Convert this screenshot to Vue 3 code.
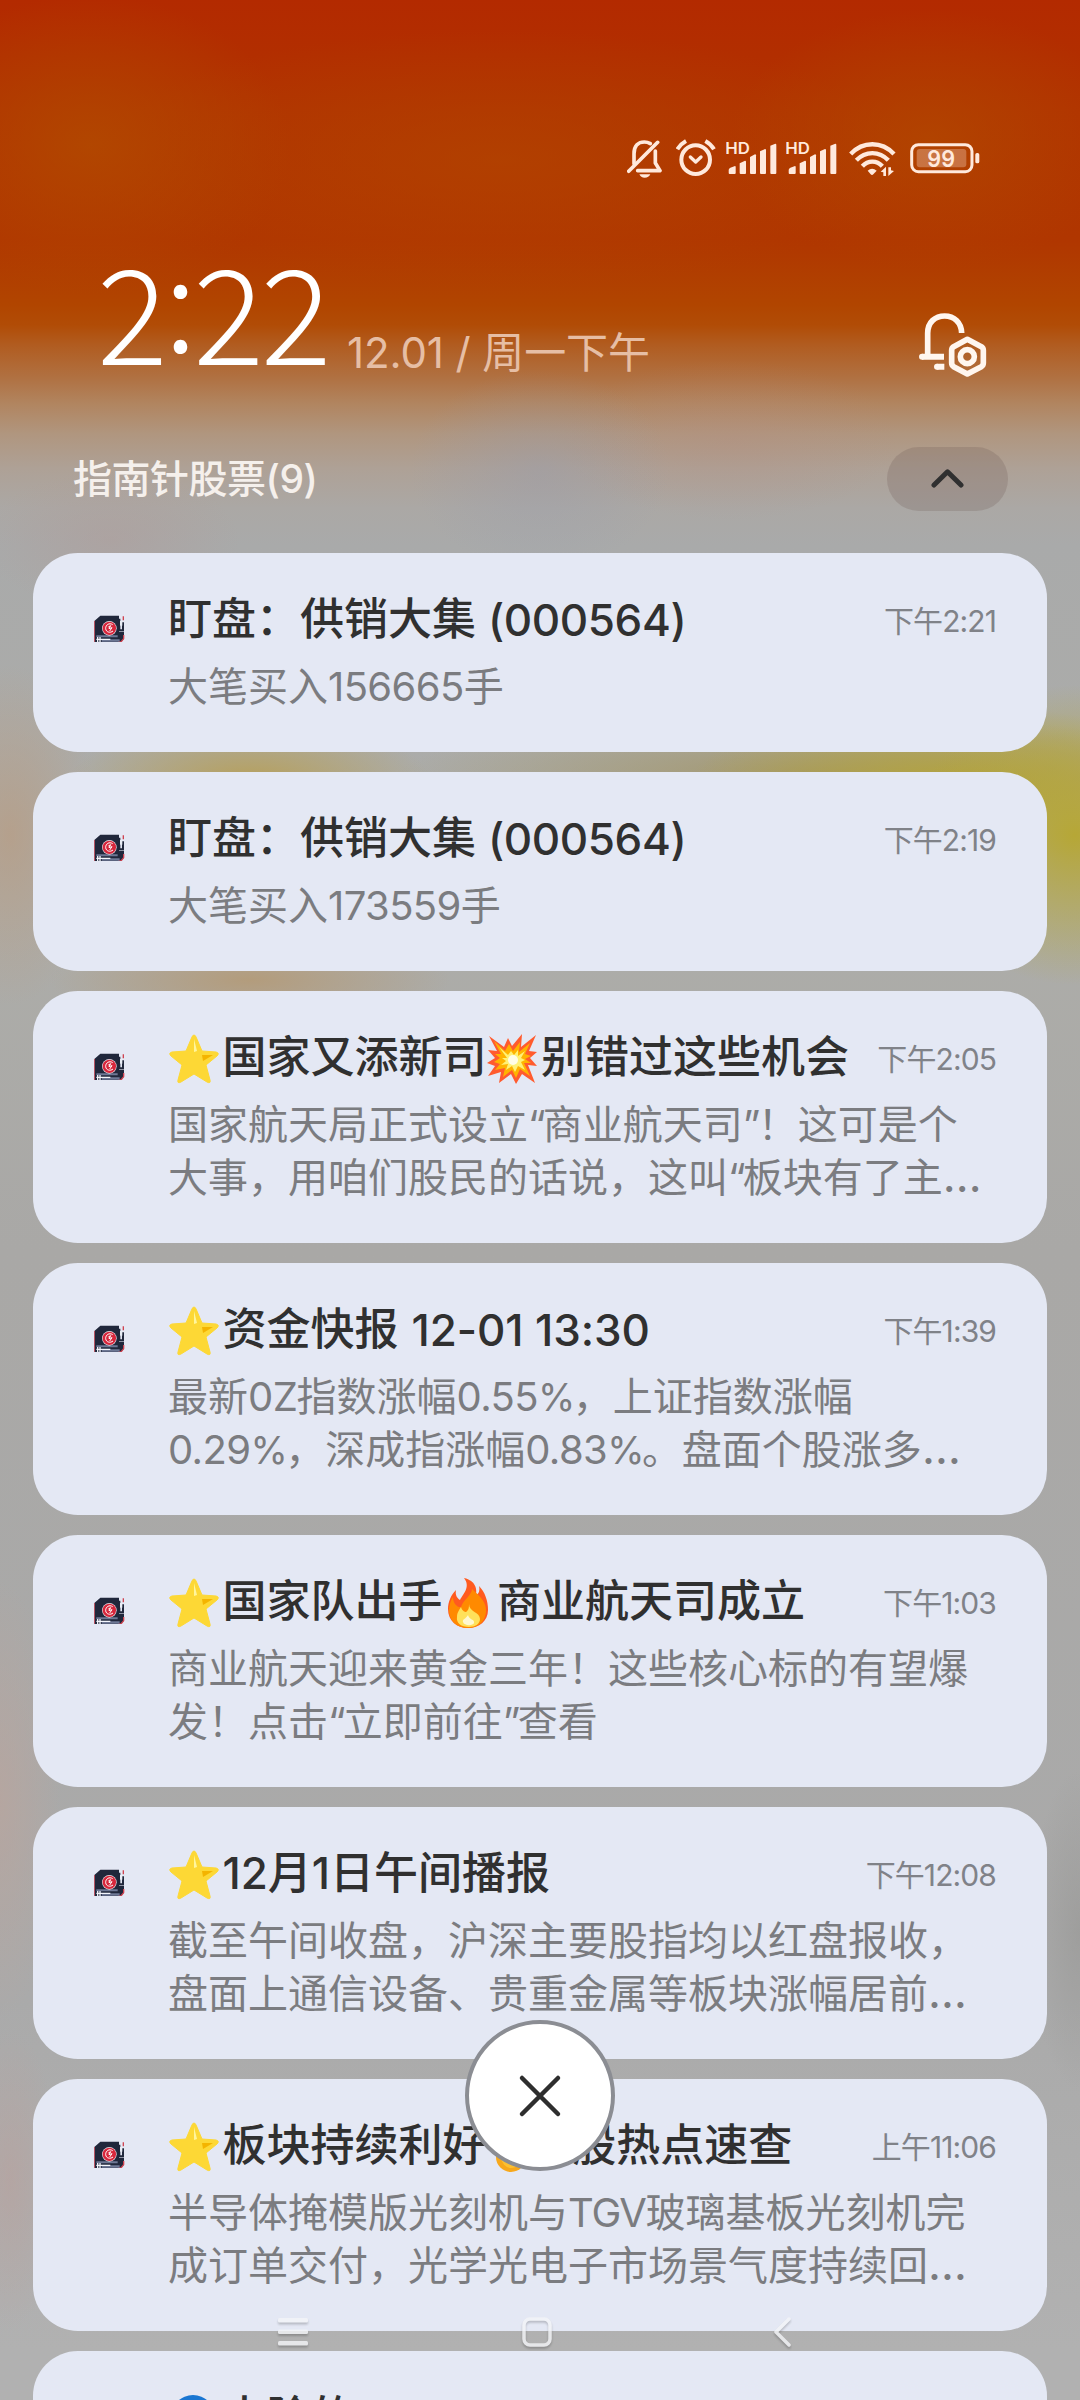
<script setup>
const group = { name: '指南针股票(9)' }

const notices = [
  { title: [{ t: '盯盘：供销大集' }, { t: '(000564)', k: 'num' }], time: '下午2:21', lines: ['大笔买入156665手'] },
  { title: [{ t: '盯盘：供销大集' }, { t: '(000564)', k: 'num' }], time: '下午2:19', lines: ['大笔买入173559手'] },
  {
    title: [{ e: 'star' }, { t: '国家又添新司' }, { e: 'boom' }, { t: '别错过这些机会' }],
    time: '下午2:05',
    lines: ['国家航天局正式设立“商业航天司”！这可是个', '大事，用咱们股民的话说，这叫“板块有了主…'],
  },
  {
    title: [{ e: 'star' }, { t: '资金快报' }, { t: '12-01 13:30', k: 'stamp' }],
    time: '下午1:39',
    lines: ['最新0Z指数涨幅0.55%，上证指数涨幅', '0.29%，深成指涨幅0.83%。盘面个股涨多…'],
  },
  {
    title: [{ e: 'star' }, { t: '国家队出手' }, { e: 'fire' }, { t: '商业航天司成立' }],
    time: '下午1:03',
    lines: ['商业航天迎来黄金三年！这些核心标的有望爆', '发！点击“立即前往”查看'],
  },
  {
    title: [{ e: 'star' }, { t: '12月1日午间播报' }],
    time: '下午12:08',
    lines: ['截至午间收盘，沪深主要股指均以红盘报收，', '盘面上通信设备、贵重金属等板块涨幅居前…'],
  },
  {
    title: [{ e: 'star' }, { t: '板块持续利好' }, { e: 'coin' }, { t: 'A股热点速查' }],
    time: '上午11:06',
    lines: ['半导体掩模版光刻机与TGV玻璃基板光刻机完', '成订单交付，光学光电子市场景气度持续回…'],
  },
  { title: [{ e: 'blue' }, { t: '大险的' }], time: '', lines: [] },
]

// Splits a line into runs so Latin text and punctuation can be spaced on their own.
function runs(line) {
  return line.match(/[0-9.]+|[A-Z]+|%|[“”]|…|[^0-9.A-Z%“”…]+/g).map((t) => {
    let k = ''
    if (/^[0-9.]/.test(t)) k = 'dig'
    else if (/^[A-Z]/.test(t)) k = 'lat'
    else if (t === '%') k = 'pct'
    else if (/[“”]/.test(t)) k = 'quo'
    else if (t === '…') k = 'ell'
    return { t, k }
  })
}
</script>

<template>
  <div class="screen">
    <div class="status">
      <svg viewBox="80 50 107 130" width="35.7" height="43.3" fill="none" stroke="#ffe9dc" stroke-width="11" stroke-linecap="round" stroke-linejoin="round">
        <path d="M101 130V100C101 76 114 65 132 65C139 65 145 67 150 70" />
        <path d="M165 92V128L179 151H112" />
        <path d="M172 66L85 153" />
        <path d="M117 162H150C147 169 141 172 133 172S120 169 117 162Z" fill="#ffe9dc" stroke="none" />
      </svg>
      <svg class="g1" viewBox="227 50 120 130" width="40" height="43.3" fill="none" stroke="#ffe9dc" stroke-width="12">
        <circle cx="286" cy="118" r="43" />
        <path d="M270 110L286 125L302 110" stroke-linecap="round" stroke-linejoin="round" stroke-width="10" />
        <path d="M231 87C237 77 246 68 257 62M341 87C335 77 326 68 315 62" />
      </svg>
      <svg v-for="n in 2" :key="n" :class="'g' + (n + 1)" viewBox="377 50 152 130" width="50.7" height="43.3" fill="#ffe9dc">
        <text x="375" y="101" font-size="48" font-weight="600" textLength="74" lengthAdjust="spacingAndGlyphs">HD</text>
        <path d="M390 142L404 137Q406 137 406 140V158Q406 161 403 161H388Q385 161 385 158V149Q385 144 390 142Z" />
        <path d="M418 129L434 121Q437 121 437 124V158Q437 161 434 161H421Q418 161 418 158Z" />
        <path d="M449 110L464 102Q467 102 467 105V158Q467 161 464 161H452Q449 161 449 158Z" />
        <path d="M479 93L494 86Q497 86 497 89V158Q497 161 494 161H482Q479 161 479 158Z" />
        <path d="M510 76L525 70Q528 70 528 73V158Q528 161 525 161H513Q510 161 510 158Z" />
      </svg>
      <svg class="g4" viewBox="746 50 140 130" width="46.7" height="43.3" fill="none" stroke="#ffe9dc" stroke-width="13">
        <path d="M751 101C788 62 844 62 881 101" />
        <path d="M768 120C795 91 837 91 864 120" />
        <path d="M786 138C803 119 829 119 846 138" />
        <path d="M802 151Q815 140 829 151L819 162Q815 166 811 162Z" fill="#ffe9dc" stroke="none" />
        <path d="M841 154L857 139V167H849V156ZM881 152L864 167V141H872V150Z" fill="#ffe9dc" stroke="none" />
      </svg>
      <svg class="g5" viewBox="929 50 210 130" width="70" height="43.3">
        <rect x="934" y="73" width="181" height="81" rx="20" fill="none" stroke="#ffe9dc" stroke-width="9" />
        <rect x="949" y="86" width="149" height="55" rx="9" fill="#ffe9dc" opacity=".3" />
        <rect x="1125" y="98" width="12" height="31" rx="5" fill="#ffe9dc" />
        <text x="981" y="140" font-size="69" font-weight="600" textLength="83" lengthAdjust="spacingAndGlyphs" fill="#ffe9dc">99</text>
      </svg>
    </div>

    <header class="head">
      <span class="clock">2<span class="colon">:</span>22</span>
      <span class="date">12.01 / 周一下午</span>
      <svg class="bell" viewBox="177 66 204 198" width="68" height="66" fill="none" stroke="#fff6ef" stroke-width="17">
        <path d="M203 200V130C203 96 226 78 254 78C282 78 304 97 305 129" />
        <path d="M186 200H252M230 230H253" stroke-width="18" />
        <circle cx="186" cy="200" r="9" fill="#fff6ef" stroke="none" /><circle cx="231" cy="230" r="9" fill="#fff6ef" stroke="none" />
        <path d="M322 148L364 170Q370 174 370 181V219Q370 226 364 230L322 252L281 230Q275 226 275 219V181Q275 174 281 170Z" stroke-linejoin="round" />
        <circle cx="322" cy="200" r="21" />
      </svg>
    </header>

    <div class="group">
      <span class="gname">{{ group.name }}</span>
      <span class="pill">
        <svg width="34" height="22" viewBox="0 0 34 22" fill="none" stroke="#303030" stroke-width="5" stroke-linecap="round" stroke-linejoin="round"><path d="M3 17L16.500 3.800L30 17" /></svg>
      </span>
    </div>

    <main class="list">
      <article v-for="(n, i) in notices" :key="i" class="card">
        <svg class="app" viewBox="41 76 92 82" width="30.7" height="27.3">
          <path d="M60 78H116V126H131V147L122 157H42V94Z" fill="#20273b" />
          <path d="M42 94V157" stroke="#c4525f" stroke-width="3" />
          <path d="M117 87V122H128V98" stroke="#20273b" stroke-width="6" fill="none" />
          <path d="M119 94H126V108H119Z" fill="#e9edf5" />
          <path d="M129 80V92M130 136V147L122 157H114" stroke="#cf4350" stroke-width="4" fill="none" />
          <path d="M48 137H112V143H48ZM64 149H118V156H64Z" fill="#6e7895" />
          <path d="M48 149H90M52 142V157M59 142V157" stroke="#f3f5fb" stroke-width="4" />
          <circle cx="87" cy="116" r="22" fill="#e9dfe6" />
          <circle cx="87" cy="116" r="20" fill="#d7273c" />
          <path d="M97 105C87 98 75 106 76 117S90 131 98 124M84 112L91 108L86 117L95 114L88 124" fill="none" stroke="#fff" stroke-width="3" />
        </svg>
        <div class="body">
          <div class="top">
            <h2 class="title">
              <template v-for="(p, j) in n.title" :key="j">
                <svg v-if="p.e" class="emoji" viewBox="0 0 50 50" width="50" height="50">
                  <g v-if="p.e === 'star'">
                    <path d="M25 1Q26.500 1 27.500 4L33 17L47 18Q51 19 48 22L37 31L41 46Q42 50 38 48L25 40L12 48Q8 50 9 46L13 31L2 22Q-1 19 3 18L17 17L22.500 4Q23.500 1 25 1Z" fill="#fdd835" stroke="#fdd835" stroke-linejoin="round" />
                    <path d="M33 21L44 21L34 27Z" fill="#f4b400" />
                    <path d="M25 5L28 17L25 18Z" fill="#fff59d" />
                  </g>
                  <g v-else-if="p.e === 'boom'">
                    <path d="M2 2L17 13L21 4L25 12L35 0L34 13L49 1L42 17L50 18L43 24L50 32L41 31L48 49L35 40L29 50L24 40L12 49L14 38L1 42L8 32L0 29L8 24L1 16L10 17Z" fill="#ff5b2e" />
                    <path d="M7 7L18 17L22 10L26 17L33 8L32 18L43 9L38 20L44 22L38 25L44 29L37 29L43 42L33 35L29 44L25 36L16 43L18 34L8 36L13 30L7 28L13 24L8 20L14 20Z" fill="#ffb300" />
                    <path d="M12 13L21 21L24 17L27 21L31 16L31 22L38 17L34 24L38 26L34 28L38 36L31 32L28 38L25 32L19 36L21 30L14 31L19 27L15 24L20 24Z" fill="#fff176" />
                    <circle cx="26" cy="26" r="5" fill="#fffde7" />
                  </g>
                  <g v-else-if="p.e === 'fire'">
                    <path d="M21 0C33 3 34 11 33 17C36 16 37 12 36 8C42 14 45 23 45 32C45 43 36 50 25 50S5 43 5 31C5 24 8 17 13 12C12 17 14 20 17 22C20 16 28 9 21 0Z" fill="#ff5a1f" />
                    <path d="M25 50C14 50 6 43 6 32C6 27 8 22 10 19C10 26 15 30 18 29C20 22 29 17 29 11C37 18 44 25 43 34C42 44 35 50 25 50Z" fill="#ff8a00" />
                    <path d="M26 26C26 34 37 34 37 41C37 46 32 49 26 49C18 49 13 45 14 39C14 34 17 31 18 29C19 33 22 34 23 34C26 32 26 29 26 26Z" fill="#ffe15a" />
                    <path d="M25 37C26 42 32 41 31 45C30 48 21 48 20 44C19 41 23 41 25 37Z" fill="#fff8d0" />
                  </g>
                  <g v-else-if="p.e === 'coin'">
                    <ellipse cx="24" cy="35" rx="15" ry="15" fill="#f7a81b" />
                    <ellipse cx="24" cy="34" rx="10" ry="12" fill="#fdc02f" />
                  </g>
                  <circle v-else cx="24" cy="23" r="22" fill="#1976d2" />
                </svg>
                <span v-else :class="p.k">{{ p.t }}</span>
              </template>
            </h2>
            <time class="time">{{ n.time }}</time>
          </div>
          <p v-for="l in n.lines" :key="l" class="line"><span v-for="(r, j) in runs(l)" :key="j" :class="r.k">{{ r.t }}</span></p>
        </div>
      </article>
    </main>

    <button class="close">
      <svg width="44" height="44" viewBox="0 0 44 44" stroke="#2e2e2e" stroke-width="4.500" stroke-linecap="round"><path d="M4 4L40 40M40 4L4 40" /></svg>
    </button>

    <nav class="nav">
      <svg width="30" height="30" viewBox="0 0 30 30" fill="#f4f5f8"><rect y="1" width="30" height="4.500" rx="1.500" /><rect y="12.500" width="30" height="4.500" rx="1.500" /><rect y="24" width="30" height="4.500" rx="1.500" /></svg>
      <svg width="30" height="30" viewBox="0 0 30 30" fill="none" stroke="#f4f5f8" stroke-width="3.500"><rect x="2" y="2" width="26" height="26" rx="6" /></svg>
      <svg width="30" height="30" viewBox="0 0 30 30" fill="none" stroke="#f4f5f8" stroke-width="3.500" stroke-linecap="round" stroke-linejoin="round"><path d="M20 2L7 15L20 28" /></svg>
    </nav>
  </div>
</template>

<style>
body { margin: 0; }
</style>

<style scoped>
.screen {
  position: relative;
  width: 1080px;
  height: 2400px;
  overflow: hidden;
  font-family: Inter, "Noto Sans CJK SC", sans-serif;
  background:
    radial-gradient(ellipse 200px 150px at 90px 145px, rgba(178, 78, 0, .7), transparent),
    radial-gradient(ellipse 200px 130px at 930px 140px, rgba(178, 78, 0, .6), transparent),
    radial-gradient(ellipse 420px 130px at 500px 160px, rgba(178, 70, 0, .65), transparent),
    radial-gradient(ellipse 130px 100px at 540px 470px, rgba(150, 156, 174, .4), transparent),
    radial-gradient(ellipse 170px 80px at 730px 440px, rgba(180, 140, 128, .3), transparent),
    radial-gradient(ellipse 160px 150px at 1075px 835px, #b6a736, transparent),
    radial-gradient(ellipse 260px 80px at 950px 785px, #b3a33c, transparent),
    radial-gradient(ellipse 420px 60px at 820px 775px, #a3976c, transparent),
    radial-gradient(ellipse 180px 60px at 250px 780px, #b6a05c, transparent),
    radial-gradient(ellipse 90px 170px at 10px 835px, rgba(184, 155, 128, .7), transparent),
    radial-gradient(ellipse 200px 50px at 250px 980px, #b39c7c, transparent),
    radial-gradient(ellipse 130px 70px at 110px 540px, rgba(178, 150, 146, .35), transparent),
    radial-gradient(ellipse 60px 220px at 0px 1800px, rgba(184, 165, 158, .8), transparent),
    radial-gradient(ellipse 50px 150px at 10px 2180px, rgba(184, 160, 156, .6), transparent),
    radial-gradient(ellipse 50px 160px at 1080px 1930px, rgba(150, 150, 148, .6), transparent),
    linear-gradient(180deg, #b32a00 0, #b13200 110px, #b03600 240px, #b14500 305px, #b14c06 325px, #b15c20 345px, #b07142 378px, #b18560 404px, #b0967f 434px, #aea196 468px, #aba8a5 508px, #a9aaaa 545px, #adada9 900px, #a9a8a6 1250px, #aaa 2000px, #b1b1b1 2350px);
}
.status { display: flex; padding: 136.500px 0 0 626.700px; height: 43.500px; }
.status svg { flex: none; display: block; }
.g1 { margin-left: 13.300px; }
.g2 { margin-left: 10.200px; }
.g3 { margin-left: 9.300px; }
.g4 { margin-left: 12.600px; }
.g5 { margin-left: 14.400px; }
.head { display: flex; align-items: flex-end; height: 218px; padding-left: 97px; box-sizing: border-box; color: #fff; }
.clock { font-family: "Noto Sans CJK SC", sans-serif; font-weight: 300; font-size: 132px; line-height: 134px; letter-spacing: -3.200px; width: 250px; white-space: nowrap; margin-bottom: 23px; }
.colon { line-height: 0; vertical-align: 13px; margin: 0 -.500px; }
.date { font-size: 42px; line-height: 50px; font-weight: 400; letter-spacing: -.1px; color: #e6bea5; white-space: nowrap; width: 521px; margin-bottom: 20px; }
.bell { margin: 0 0 20px 51px; }
.group { display: flex; justify-content: space-between; align-items: center; height: 64px; margin-top: 49px; padding: 0 72px 0 73px; }
.gname { color: #f5f0ec; font-size: 39px; font-weight: 500; line-height: 50px; letter-spacing: -.5px; }
.pill { width: 121px; height: 64px; border-radius: 32px; background: rgba(110, 85, 80, .23); display: flex; align-items: center; justify-content: center; }
.list { display: flex; flex-direction: column; gap: 20px; padding: 42px 33px 0; }
.card { flex: none; display: flex; box-sizing: border-box; min-height: 199px; border-radius: 45px; background: #e4e8f4; padding: 41px 51px 39px 61px; }
.app { flex: none; margin-top: 21px; }
.body { flex: 1; margin-left: 43.300px; min-width: 0; }
.top { display: flex; height: 66px; justify-content: space-between; align-items: flex-start; }
.title { margin: 0; display: flex; align-items: center; height: 51px; font-size: 44px; line-height: 53px; font-weight: 500; color: #303030; white-space: nowrap; }
.emoji { flex: none; margin: 2px 3.500px 0 1px; }
.num { margin-left: 12px; padding-top: 2px; letter-spacing: -.4px; }
.stamp { margin-left: 13px; padding-top: 2px; letter-spacing: -.1px; }
.time { font-size: 30px; line-height: 55px; letter-spacing: -.9px; color: #808288; white-space: nowrap; }
.line { margin: 0; height: 53px; line-height: 53px; font-size: 40px; color: #7b7c80; white-space: nowrap; }
.dig { letter-spacing: -.6px; }
.lat { letter-spacing: -1.200px; }
.pct { font-size: 38px; letter-spacing: -2.600px; }
.quo { letter-spacing: -2.800px; }
.ell { font-size: 45px; line-height: 0; }
.close { position: absolute; left: 465px; top: 2020px; width: 150px; height: 151px; padding: 0; border: 4px solid #8b8d93; border-radius: 50%; background: #fff; display: flex; align-items: center; justify-content: center; }
.nav { position: absolute; left: 0; right: 0; top: 2317px; padding: 0 281.500px 0 278px; display: grid; grid-template-columns: 243.500px 1fr 30px; opacity: .8; filter: drop-shadow(0 2px 1px rgba(0, 0, 0, .25)); }
</style>
